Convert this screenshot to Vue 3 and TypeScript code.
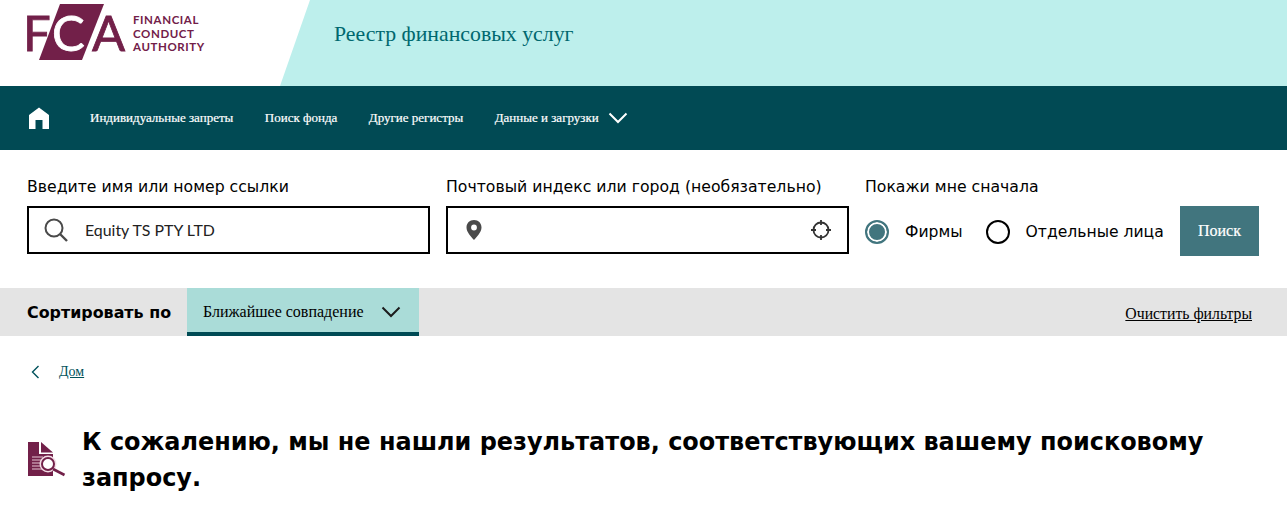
<script setup lang="ts">
const navItems: string[] = ['Индивидуальные запреты', 'Поиск фонда', 'Другие регистры', 'Данные и загрузки']
</script>

<template>
  <div class="page">
    <header class="top">
      <div class="logo">
        <svg class="mark" width="100" height="56" viewBox="0 0 100 56" aria-label="FCA">
          <polygon points="33,0 77,0 55,56 12,56" fill="#722049" />
          <text x="-4" y="47" class="fca" fill="#722049" stroke="#722049">F</text>
          <text x="25" y="47" class="fca" fill="#fff" stroke="#fff">C</text>
          <text x="65" y="47" class="fca" fill="#722049" stroke="#722049">A</text>
        </svg>
        <div class="logotext">
          <span>FINANCIAL</span>
          <span>CONDUCT</span>
          <span>AUTHORITY</span>
        </div>
      </div>
      <div class="band">
        <span class="title">Реестр финансовых услуг</span>
      </div>
    </header>

    <nav class="nav">
      <svg class="home" width="22" height="22" viewBox="0 0 22 22">
        <path d="M11 0.5 L21 8 V22 H14.5 V13 H7.5 V22 H1 V8 Z" fill="#fff" />
      </svg>
      <a v-for="item in navItems" :key="item" class="navlink">{{ item }}</a>
      <svg class="navchev" width="20" height="12" viewBox="0 0 20 12">
        <path d="M1.5 1.5 L10 10 L18.5 1.5" fill="none" stroke="#fff" stroke-width="2" />
      </svg>
    </nav>

    <section class="search">
      <div class="field first">
        <label>Введите имя или номер ссылки</label>
        <div class="box">
          <svg width="26" height="26" viewBox="0 0 26 26">
            <circle cx="11" cy="11" r="8.5" fill="none" stroke="#4a4a4a" stroke-width="2" />
            <path d="M17 17 L24 24" stroke="#4a4a4a" stroke-width="2.4" />
          </svg>
          <span class="value">Equity TS PTY LTD</span>
        </div>
      </div>
      <div class="field second">
        <label>Почтовый индекс или город (необязательно)</label>
        <div class="box loc">
          <svg width="16" height="20" viewBox="0 0 16 20">
            <path fill-rule="evenodd" fill="#4a4a4a" d="M8 0 C3.6 0 0.5 3.2 0.5 7.4 C0.5 12 5 16.5 8 20 C11 16.5 15.5 12 15.5 7.4 C15.5 3.2 12.4 0 8 0 Z M8 4.6 A2.9 2.9 0 1 1 8 10.4 A2.9 2.9 0 1 1 8 4.6 Z" />
          </svg>
          <svg width="22" height="22" viewBox="0 0 22 22">
            <circle cx="11" cy="11" r="7.5" fill="none" stroke="#333" stroke-width="1.8" />
            <path d="M11 1 V6 M11 16 V21 M1 11 H6 M16 11 H21" stroke="#333" stroke-width="1.8" />
          </svg>
        </div>
      </div>
      <div class="field third">
        <label>Покажи мне сначала</label>
        <div class="radios">
          <span class="radio on"></span>
          <span class="rlabel firms">Фирмы</span>
          <span class="radio"></span>
          <span class="rlabel">Отдельные лица</span>
        </div>
      </div>
      <button class="go">Поиск</button>
    </section>

    <section class="sortbar">
      <strong class="sortlabel">Сортировать по</strong>
      <div class="select">
        <span>Ближайшее совпадение</span>
        <svg width="20" height="12" viewBox="0 0 20 12">
          <path d="M1.5 1.5 L10 10 L18.5 1.5" fill="none" stroke="#1c1c1c" stroke-width="2" />
        </svg>
      </div>
      <a class="clear">Очистить фильтры</a>
    </section>

    <div class="crumb">
      <svg width="9" height="14" viewBox="0 0 9 14">
        <path d="M7.5 1 L1.5 7 L7.5 13" fill="none" stroke="#00525c" stroke-width="1.4" />
      </svg>
      <a>Дом</a>
    </div>

    <div class="message">
      <svg class="docicon" width="38" height="36" viewBox="0 0 38 36">
        <path d="M0 0 H11 V12 H25 V34 H0 Z" fill="#722049" />
        <path d="M13 0 L25 10.5 H13 Z" fill="#722049" />
        <path d="M4 15 H15 M4 18 H14 M4 21 H13 M4 24 H13 M4 27 H14" stroke="#e6c5d4" stroke-width="1" />
        <circle cx="20" cy="22" r="8.5" fill="#f3dde6" />
        <circle cx="20" cy="22" r="6" fill="#fff" stroke="#722049" stroke-width="2" />
        <path d="M25 27 L36.5 33" stroke="#722049" stroke-width="2.6" />
      </svg>
      <h1>К сожалению, мы не нашли результатов, соответствующих вашему поисковому запросу.</h1>
    </div>
  </div>
</template>

<style>
html, body { margin: 0; background: #fff; }
</style>

<style scoped>
.page { width: 1287px; height: 514px; overflow: hidden; font-family: "DejaVu Sans", sans-serif; color: #000; }
.top { height: 86px; display: flex; position: relative; }
.logo { width: 310px; flex: none; padding: 4px 0 0 27px; box-sizing: border-box; display: flex; align-items: flex-start; }
.mark { flex: none; width: 100px; height: 56px; overflow: visible; }
.fca { font-family: Lato, sans-serif; font-size: 49px; font-weight: 400; stroke-width: 0.8px; }
.logotext { margin: 9px 0 0 6px; display: flex; flex-direction: column; font-family: Lato, sans-serif; font-size: 11.5px; font-weight: 700; line-height: 13.5px; letter-spacing: 0.6px; color: #722049; }
.band { flex: 1; margin-left: -30px; padding-left: 54px; background: #bdefec; clip-path: polygon(30px 0, 100% 0, 100% 100%, 0 100%); display: flex; align-items: flex-start; }
.title { margin-top: 21px; font-family: "Liberation Serif", serif; font-size: 21.8px; line-height: 26px; color: #00686f; }
.nav { height: 64px; background: #014a54; display: flex; align-items: center; padding-left: 28px; }
.home { margin-right: 40px; }
.navlink { font-family: "Liberation Serif", serif; font-size: 13px; color: #fff; margin-right: 31.5px; -webkit-text-stroke: 0.2px #fff; }
.navlink:last-of-type { margin-right: 9px; }
.search { height: 138px; position: relative; display: flex; padding: 28px 0 0 27px; box-sizing: border-box; }
.field label { display: block; font-size: 15.7px; line-height: 18px; }
.first { width: 419px; }
.second { width: 419px; }
.third { width: 315px; }
.box { width: 403px; height: 48px; margin-top: 10px; border: 2px solid #000; box-sizing: border-box; display: flex; align-items: center; padding-left: 14px; padding-bottom: 1px; }
.value { margin-left: 16px; font-family: Lato, sans-serif; font-size: 15.9px; color: #222; }
.loc { justify-content: space-between; padding: 0 15px 0 18px; }
.radios { display: flex; align-items: center; height: 48px; margin-top: 12px; }
.radio { width: 24px; height: 24px; box-sizing: border-box; border-radius: 50%; border: 2px solid #000; background: #fff; }
.radio.on { border-color: #41757e; background: #41757e; box-shadow: inset 0 0 0 2px #fff; }
.rlabel { font-size: 15.6px; margin-left: 16px; }
.firms { margin-right: 23px; }
.go { position: absolute; left: 1180px; top: 56px; width: 79px; height: 50px; border: 0; background: #41757e; color: #fff; font-family: "Liberation Serif", serif; font-size: 16px; padding: 0; -webkit-text-stroke: 0.2px #fff; }
.sortbar { height: 48px; background: #e4e4e4; display: flex; align-items: center; padding: 0 35px 0 27px; }
.sortlabel { font-size: 15.9px; width: 160px; flex: none; }
.select { width: 232px; height: 48px; box-sizing: border-box; background: #aadcd8; border-bottom: 4px solid #004b55; display: flex; align-items: center; justify-content: space-between; padding: 4px 18px 0 16px; font-family: "Liberation Serif", serif; font-size: 16px; }
.clear { margin-left: auto; font-family: "Liberation Serif", serif; font-size: 15.75px; text-decoration: underline; padding-top: 3px; }
.crumb { display: flex; align-items: center; gap: 19px; padding: 28px 0 0 31px; height: 16px; font-family: "Liberation Serif", serif; font-size: 14px; }
.crumb a { color: #00525c; text-decoration: underline; font-size: 14px; }
.message { display: flex; align-items: flex-start; padding: 51px 0 0 28px; }
.docicon { margin-top: 11px; flex: none; }
h1 { margin: -7px 0 0 16px; width: 1160px; font-size: 23.95px; line-height: 36px; font-weight: 700; }
</style>
